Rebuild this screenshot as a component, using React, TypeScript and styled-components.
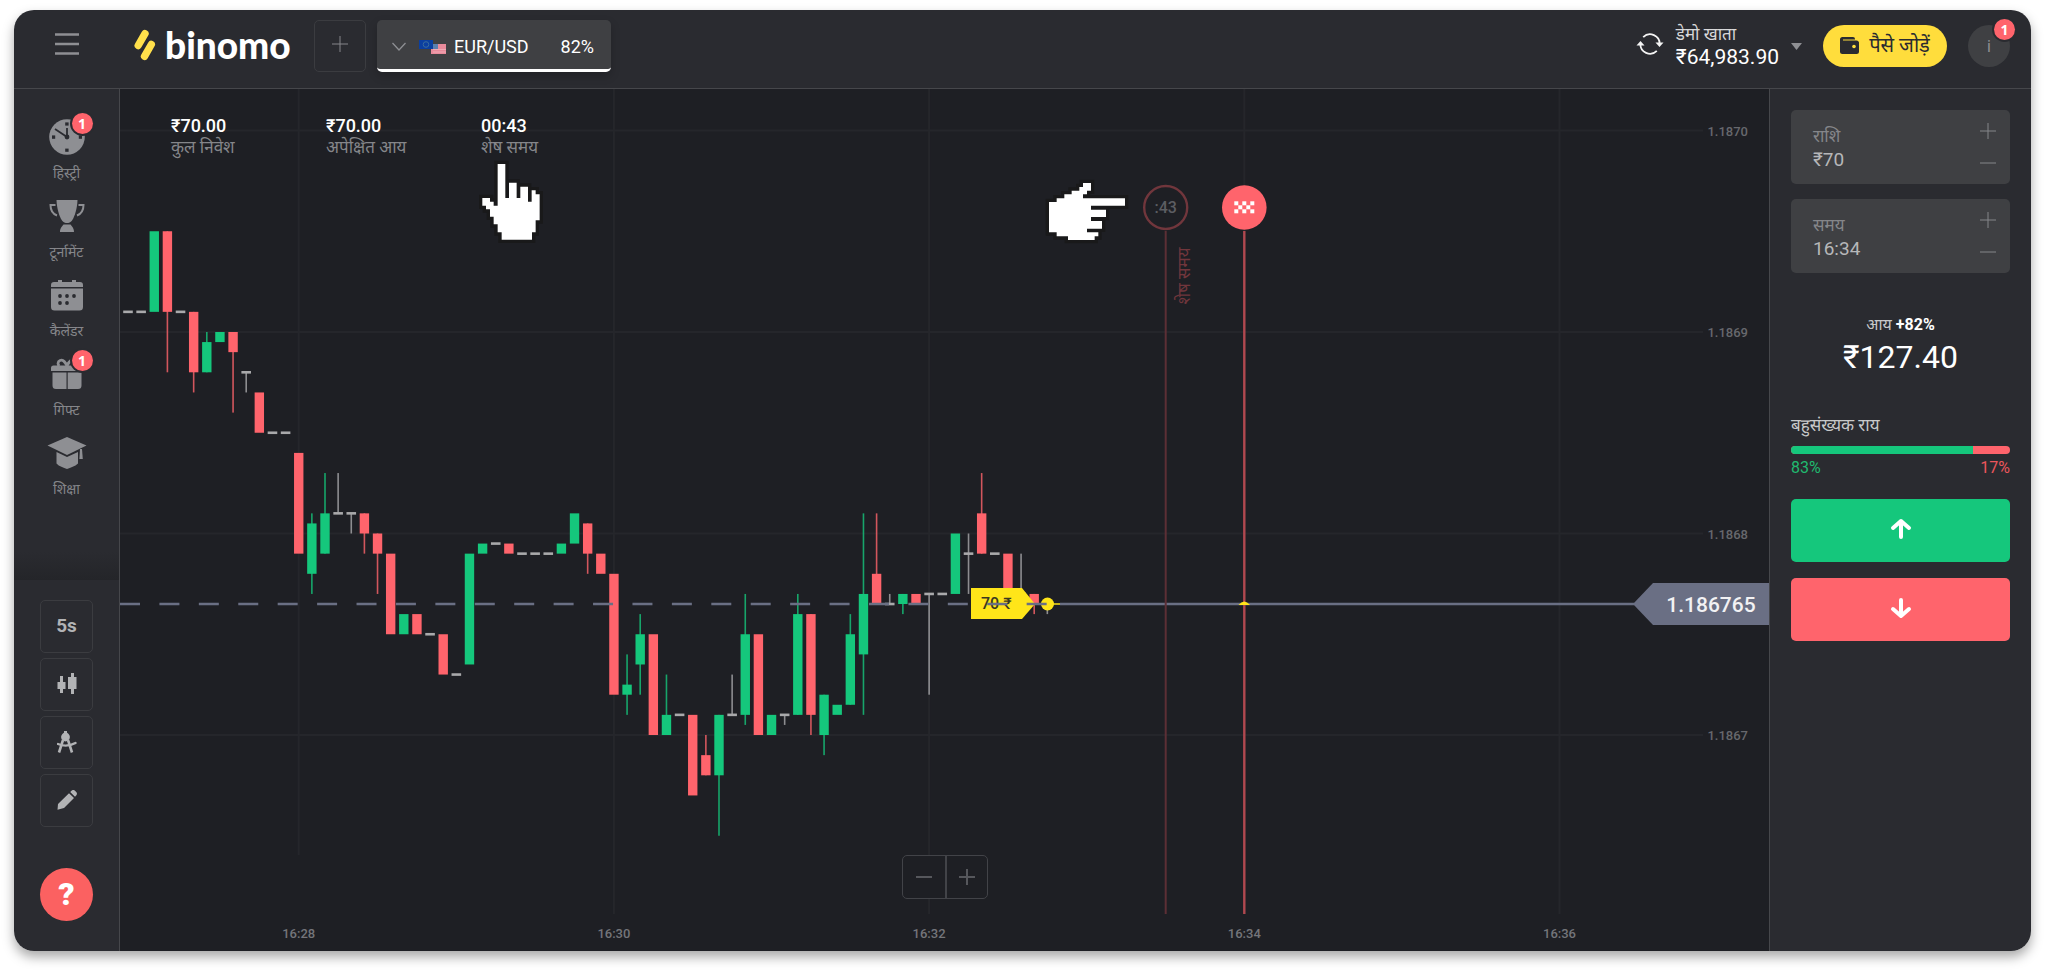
import React from "react";
import styled, { createGlobalStyle } from "styled-components";

const color = {
  panel: "#2a2b30",
  chart: "#1e1f24",
  line: "#46474b",
  faint: "#3b3c40",
  field: "#3f4043",
  muted: "#85868a",
  icon: "#8e8f93",
  green: "#15c77c",
  red: "#ff646c",
  yellow: "#ffdd3c",
  tag: "#6a6f84",
};

const Global = createGlobalStyle`
  *, *::before, *::after { box-sizing: border-box; }
  body {
    margin: 0;
    background: #fff;
    font-family: Roboto, "Noto Sans Devanagari", "Noto Sans", sans-serif;
    color: #fff;
  }
  button, input { font: inherit; color: inherit; }
  button { cursor: pointer; padding: 0; border: 0; background: none; }
`;

const Page = styled.div`
  padding: 10px 17px 22px 14px;
`;

const Shell = styled.div`
  display: flex;
  flex-direction: column;
  min-height: calc(100vh - 32px);
  border-radius: 20px;
  overflow: hidden;
  background: ${color.panel};
`;

const Frame = styled.div`
  border-radius: 20px;
  box-shadow: 0 6px 12px rgba(0, 0, 0, 0.34);
`;

/* ---------- header ---------- */

const Header = styled.header`
  display: flex;
  align-items: center;
  height: 79px;
  flex: none;
  padding: 0 21px 6px 0;
  border-bottom: 1px solid ${color.line};
`;

const MenuButton = styled.button`
  display: flex;
  justify-content: center;
  width: 105px;
  flex: none;
  padding-bottom: 4px;
`;

const Logo = styled.a`
  display: flex;
  align-items: center;
  gap: 9px;
  width: 180px;
  margin-left: 15px;
  padding-bottom: 2px;
  flex: none;
  color: #fff;
  text-decoration: none;
  font: 900 37px/40px Lato, sans-serif;
`;

const AddTab = styled.button`
  display: flex;
  align-items: center;
  justify-content: center;
  width: 52px;
  height: 52px;
  flex: none;
  border: 1px solid ${color.faint};
  border-radius: 5px;
  margin-right: 11px;
  padding-bottom: 4px;
`;

const AssetTab = styled.button`
  position: relative;
  display: flex;
  align-items: center;
  width: 234px;
  height: 52px;
  padding: 4px 17px 0 15px;
  overflow: hidden;
  flex: none;
  border-radius: 5px;
  background: ${color.field};
  box-shadow: 0 4px 10px rgba(0, 0, 0, 0.2);
  font-size: 18px;
  border-bottom: 3px solid #fff;
`;

const AssetName = styled.span`
  margin-left: 8px;
  flex: 1;
  text-align: left;
`;

const Pair = styled.svg`
  margin-left: 13px;
`;

const HeaderEnd = styled.div`
  display: flex;
  align-items: center;
  margin-left: auto;
`;

const Account = styled.button`
  display: flex;
  align-items: center;
  gap: 12px;
  text-align: left;
  margin-right: 21px;
`;

const AccountText = styled.span`
  display: flex;
  flex-direction: column;
`;

const AccountName = styled.span`
  font-size: 17px;
  line-height: 22px;
  color: #d8d8da;
`;

const Balance = styled.span`
  font-size: 21px;
  line-height: 24px;
`;

const Deposit = styled.button`
  display: flex;
  align-items: center;
  justify-content: center;
  gap: 10px;
  width: 124px;
  height: 42px;
  padding-bottom: 2px;
  border-radius: 21px;
  background: ${color.yellow};
  color: #2a2b30;
  font-size: 20px;
  line-height: 24px;
  margin-right: 21px;
`;

const Avatar = styled.button`
  position: relative;
  width: 42px;
  height: 42px;
  border-radius: 50%;
  background: ${color.field};
  color: ${color.icon};
  font-size: 16px;
`;

const Badge = styled.span`
  position: absolute;
  top: ${(p: { $top: number }) => p.$top}px;
  right: -5px;
  width: 21px;
  height: 21px;
  border-radius: 50%;
  background: ${color.red};
  box-shadow: 0 0 0 2px ${color.panel};
  color: #fff;
  font: 700 14px/21px "Open Sans", sans-serif;
  text-align: center;
`;

/* ---------- body ---------- */

const Body = styled.div`
  display: grid;
  grid-template-columns: 106px minmax(0, 1fr) 262px;
  flex: 1;
`;

const Sidebar = styled.aside`
  display: flex;
  flex-direction: column;
  border-right: 1px solid ${color.line};
`;

const Nav = styled.nav`
  display: flex;
  flex-direction: column;
  align-items: center;
  height: 491px;
  padding-top: 28px;
  background: linear-gradient(to top, #242529, ${color.panel} 28px);
`;

const NavItem = styled.a`
  display: flex;
  flex-direction: column;
  align-items: center;
  width: 100%;
  height: 79px;
  color: ${color.muted};
  text-decoration: none;
  font-size: 14px;
  line-height: 20px;
`;

const NavIcon = styled.span`
  position: relative;
  display: flex;
  align-items: center;
  justify-content: center;
  width: 40px;
  height: 40px;
  color: ${color.icon};
  margin-bottom: 6px;
`;

const BadgeSlot = styled.span`
  position: absolute;
  top: 0;
  right: -1px;
`;

const Tools = styled.div`
  display: flex;
  flex-direction: column;
  align-items: center;
  gap: 5px;
  padding: 20px 0 30px;
  flex: 1;
`;

const Tool = styled.button`
  display: flex;
  align-items: center;
  justify-content: center;
  width: 53px;
  height: 53px;
  padding-bottom: 2px;
  border: 1px solid ${color.faint};
  border-radius: 5px;
  color: #b2b3b5;
  font-size: 19px;
  font-weight: 700;
`;

const Help = styled.button`
  width: 53px;
  height: 53px;
  margin-top: auto;
  border-radius: 50%;
  background: #fb6161;
  font-size: 32px;
  font-weight: 900;
  line-height: 53px;
`;

const ChartArea = styled.main`
  position: relative;
  background: ${color.chart};
`;

const Chart = styled.svg`
  display: block;
  width: 100%;
  height: auto;
  font-family: Roboto, "Noto Sans Devanagari", "Noto Sans", sans-serif;
`;

const Stats = styled.dl`
  position: absolute;
  top: 26px;
  left: 51px;
  display: flex;
  margin: 0;
`;

const Stat = styled.div`
  display: flex;
  flex-direction: column-reverse;
  width: 155px;
`;

const StatLabel = styled.dt`
  font-size: 17px;
  line-height: 20px;
  color: ${color.muted};
`;

const StatValue = styled.dd`
  margin: 0;
  font-size: 18px;
  font-weight: 500;
  line-height: 22px;
`;

const Zoom = styled.div`
  position: absolute;
  left: 50%;
  bottom: 52px;
  transform: translateX(-50%);
  display: flex;
  border: 1px solid #424348;
  border-radius: 5px;
  background: ${color.chart};
`;

const ZoomButton = styled.button`
  display: flex;
  align-items: center;
  justify-content: center;
  width: 42px;
  height: 42px;
  & + & {
    border-left: 2px solid #424348;
  }
`;

/* ---------- deal panel ---------- */

const Deal = styled.aside`
  display: flex;
  flex-direction: column;
  padding: 21px 21px 0;
  border-left: 1px solid ${color.line};
`;

const Field = styled.div`
  display: flex;
  justify-content: space-between;
  height: 74px;
  padding: 12px 13px 12px 22px;
  margin-bottom: 15px;
  border-radius: 5px;
  background: ${color.field};
`;

const FieldText = styled.label`
  display: flex;
  flex-direction: column;
  padding-top: 2px;
  font-size: 17px;
  line-height: 24px;
  color: ${color.muted};
`;

const FieldInput = styled.input`
  width: 110px;
  padding: 0;
  border: 0;
  outline: 0;
  background: none;
  font-size: 19px;
  line-height: 24px;
  height: 24px;
  color: #b6b7b9;
`;

const Steps = styled.div`
  display: flex;
  flex-direction: column;
  justify-content: space-between;
`;

const Step = styled.button`
  display: flex;
  width: 18px;
  height: 18px;
`;

const Income = styled.div`
  margin-top: 25px;
  text-align: center;
  font-size: 16px;
  line-height: 24px;
  color: #c8c9ca;
`;

const Percent = styled.b`
  color: #fff;
`;

const Payout = styled.div`
  font-size: 32px;
  line-height: 40px;
  text-align: center;
`;

const MajorityTitle = styled.div`
  margin-top: 36px;
  font-size: 17px;
  line-height: 24px;
  color: #c8c9ca;
`;

const Bar = styled.div`
  display: flex;
  height: 8px;
  margin-top: 9px;
  border-radius: 4px;
  overflow: hidden;
  background: ${color.red};
`;

const BarFill = styled.div`
  background: ${color.green};
`;

const BarLabels = styled.div`
  display: flex;
  justify-content: space-between;
  margin: 3px 0 20px;
  font-size: 16px;
  line-height: 22px;
`;

const Share = styled.span<{ $up?: boolean }>`
  color: ${(p) => (p.$up ? "#20b96f" : "#ec565c")};
`;

const Trade = styled.button<{ $up?: boolean }>`
  display: flex;
  align-items: center;
  justify-content: center;
  height: 63px;
  padding-bottom: 4px;
  margin-bottom: 16px;
  border-radius: 5px;
  background: ${(p) => (p.$up ? color.green : color.red)};
`;

/* ---------- chart data ---------- */

type Kind = "g" | "r" | "d";
// kind, body top, body bottom, high, low — in half-pips below 1.1870
type Candle = [Kind, number, number, number?, number?];

const candles: Candle[] = [
  ["d", 18, 18], ["d", 18, 18], ["g", 10, 18], ["r", 10, 18, 10, 24], ["d", 18, 18],
  ["r", 18, 24, 18, 26], ["g", 21, 24, 20, 24], ["g", 20, 21], ["r", 20, 22, 20, 28],
  ["d", 24, 24, 24, 26], ["r", 26, 30], ["d", 30, 30], ["d", 30, 30], ["r", 32, 42],
  ["g", 39, 44, 38, 46], ["g", 38, 42, 34, 42], ["d", 38, 38, 34, 38], ["d", 38, 38, 38, 40],
  ["r", 38, 40, 38, 42], ["r", 40, 42, 40, 46], ["r", 42, 50], ["g", 48, 50], ["r", 48, 50],
  ["d", 50, 50], ["r", 50, 54], ["d", 54, 54], ["g", 42, 53], ["g", 41, 42], ["d", 41, 41],
  ["r", 41, 42], ["d", 42, 42], ["d", 42, 42], ["d", 42, 42], ["g", 41, 42], ["g", 38, 41],
  ["r", 39, 42, 39, 44], ["r", 42, 44], ["r", 44, 56], ["g", 55, 56, 52, 58],
  ["g", 50, 53, 48, 56], ["r", 50, 60], ["g", 58, 60, 54, 60], ["d", 58, 58], ["r", 58, 66],
  ["r", 62, 64, 60, 64], ["g", 58, 64, 58, 70], ["d", 58, 58, 54, 58], ["g", 50, 58, 46, 59],
  ["r", 50, 60], ["g", 58, 60], ["d", 58, 58, 58, 59], ["g", 48, 58, 46, 58],
  ["r", 48, 58, 48, 60], ["g", 56, 60, 56, 62], ["g", 57, 58], ["g", 50, 57, 48, 57],
  ["g", 46, 52, 38, 58], ["r", 44, 47, 38, 47], ["d", 47, 47, 46, 47], ["g", 46, 47, 46, 48],
  ["r", 46, 47], ["d", 46, 46, 46, 56], ["d", 46, 46], ["g", 40, 46], ["d", 42, 42, 40, 46],
  ["r", 38, 42, 34, 42], ["d", 42, 42], ["r", 42, 46], ["d", 46, 46, 42, 46],
  ["r", 46, 47, 46, 48], ["d", 47, 47, 47, 48],
];

const STEP = 315.2 / 24;
const candleX = (i: number) => 8 + i * STEP;
const priceY = (n: number) => 41.5 + n * 10.075;
const fills: Record<Kind, string> = { g: color.green, r: color.red, d: "#a9a9ab" };

const times = ["16:28", "16:30", "16:32", "16:34", "16:36"];
const prices = ["1.1870", "1.1869", "1.1868", "1.1867"];
const timeX = (i: number) => 178.7 + i * 315.2;
const PRICE_Y = 515;

const handUp =
  "413,492 436,492 436,594 447,594 447,548 470,548 470,594 481,594 481,560 504,560 504,605 515,605 515,571 527,571 527,583 539,583 539,661 527,661 527,697 516,697 516,719 425,719 425,697 413,697 413,673 401,673 401,650 390,650 390,628 378,628 378,617 367,617 367,594 390,594 390,605 401,605 401,617 413,617";
const handRight =
  "147,126 170,126 170,115 193,115 193,103 215,103 215,92 238,92 238,81 249,81 249,69 273,69 273,92 261,92 261,103 249,103 249,115 375,115 375,137 273,137 273,149 318,149 318,171 273,171 273,183 306,183 306,206 261,206 261,217 295,217 295,229 284,229 284,240 204,240 204,229 170,229 170,217 147,217";

const checks: [number, number][] = [
  [0, 0], [2, 0], [4, 0], [1, 1], [3, 1], [0, 2], [2, 2], [4, 2],
];

function PriceChart() {
  return (
    <Chart viewBox="0 0 1649 862" role="img" aria-label="EUR/USD">
      <g stroke="#25262b" strokeWidth="2">
        {times.map((t, i) => (
          <line key={t} x1={timeX(i)} x2={timeX(i)} y1="0" y2={i ? 825 : 766} />
        ))}
        {prices.map((p, i) => (
          <line key={p} x1="0" x2="1583" y1={priceY(i * 20)} y2={priceY(i * 20)} />
        ))}
      </g>
      <g fill="#74757a" fontSize="13" fontWeight="500">
        {times.map((t, i) => (
          <text key={t} x={timeX(i)} y="849" textAnchor="middle">{t}</text>
        ))}
        {prices.map((p, i) => (
          <text key={p} x="1628" y={priceY(i * 20) + 5} textAnchor="end" fill="#67686d">{p}</text>
        ))}
      </g>
      {candles.map(([kind, top, bottom, high, low], i) => (
        <g key={i} fill={fills[kind]}>
          {high !== undefined && low !== undefined && (
            <rect
              x={candleX(i) - 0.8}
              width="1.6"
              y={priceY(high)}
              height={(low - high) * 10.075}
              opacity="0.8"
            />
          )}
          {kind === "d" ? (
            <rect x={candleX(i) - 4.8} width="9.6" y={priceY(top) - 1.3} height="2.6" />
          ) : (
            <rect
              x={candleX(i) - 4.7}
              width="9.4"
              y={priceY(top)}
              height={(bottom - top) * 10.075}
            />
          )}
        </g>
      ))}

      <polygon points="851,499 902,499 915,515 902,530 851,530" fill="#ffe519" />
      <text x="861" y="520" fontSize="16" fontWeight="500" fill="#3a3820">70 ₹</text>
      <circle cx="927.5" cy={PRICE_Y} r="6.5" fill="#ffe519" />
      <line x1="932" x2="941" y1={PRICE_Y} y2={PRICE_Y} stroke="#ffe519" strokeWidth="1.5" />
      <line
        x1="0"
        x2="927"
        y1={PRICE_Y}
        y2={PRICE_Y}
        stroke={color.tag}
        strokeWidth="2.6"
        strokeDasharray="20 19.42"
      />
      <line x1="940" x2="1514" y1={PRICE_Y} y2={PRICE_Y} stroke={color.tag} strokeWidth="2.6" />
      <polygon points="1513,515 1533,494 1649,494 1649,536 1533,536" fill={color.tag} />
      <text x="1591" y="523" fontSize="21" fontWeight="500" fill="#f2f2f4" textAnchor="middle">
        1.186765
      </text>

      <g stroke="#5c2f35" fill="none">
        <line x1="1045.7" x2="1045.7" y1="142" y2="825" strokeWidth="2" />
        <circle cx="1045.7" cy="118.5" r="21.5" strokeWidth="2.4" stroke="#71363c" />
      </g>
      <text x="1045.7" y="124" fontSize="16" fontWeight="500" fill="#5c5d62" textAnchor="middle">:43</text>
      <text transform="translate(1070 187) rotate(-90)" fontSize="17" fill="#71363c" textAnchor="middle">
        शेष समय
      </text>

      <line x1="1124.3" x2="1124.3" y1="142" y2="825" stroke="#b0484f" strokeWidth="2.4" />
      <circle cx="1124.3" cy="118.5" r="22.3" fill={color.red} />
      {checks.map(([cx, cy]) => (
        <rect key={`${cx}-${cy}`} x={1114.3 + cx * 4} y={112.3 + cy * 4} width="4" height="4" fill="#fff" />
      ))}
      <path d="M1118.5 516 Q1124.3 509 1130 516 Z" fill="#ffe519" />

      <g fill="#fff" stroke="#19191a" strokeWidth="20" paintOrder="stroke">
        <polygon points={handUp} transform="translate(240 -89) scale(0.3333)" />
        <polygon points={handRight} transform="translate(880 71) scale(0.3333)" />
      </g>
    </Chart>
  );
}

/* ---------- icons ---------- */

const Plus = ({ size = 18, width = 1, stroke = "#85868a" }) => (
  <svg width={size} height={size} viewBox="0 0 18 18" stroke={stroke} strokeWidth={width}>
    <path d="M9 1v16M1 9h16" />
  </svg>
);
const Minus = ({ size = 18, width = 1, stroke = "#85868a" }) => (
  <svg width={size} height={size} viewBox="0 0 18 18" stroke={stroke} strokeWidth={width}>
    <path d="M1 9h16" />
  </svg>
);

const ClockIcon = () => (
  <svg width="36" height="36" viewBox="0 0 36 36">
    <circle cx="18" cy="18" r="17.8" fill="currentColor" />
    <g fill={color.panel}>
      <rect x="16.2" y="3.4" width="3.4" height="3.2" />
      <rect x="16.2" y="29.6" width="3.4" height="3.2" />
      <rect x="3" y="16.4" width="3.2" height="3.4" />
      <rect x="29.8" y="16.4" width="3.2" height="3.4" />
      <circle cx="18" cy="18" r="2.4" />
    </g>
    <path d="M18 18V9M18 18L6 10" stroke={color.panel} strokeWidth="1.8" />
  </svg>
);
const TrophyIcon = () => (
  <svg width="36" height="34" viewBox="0 0 36 34" fill="currentColor">
    <path d="M7.5 1h21c-.3 8-2.500 16-5.500 20.500-1.500 2-3.200 2.500-5 2.500s-3.500-.5-5-2.500C10 17 7.800 9 7.500 1z" />
    <path d="M14.500 25.500h7c1.500 2 3.500 3.500 3.500 7.500H11c0-4 2-5.500 3.500-7.500z" />
    <path d="M6.500 6H1.500c0 5 2.500 9 6.500 10.500M29.500 6h5c0 5-2.500 9-6.500 10.500" fill="none" stroke="currentColor" strokeWidth="2" />
  </svg>
);
const CalendarIcon = () => (
  <svg width="32" height="32" viewBox="0 0 32 32">
    <path d="M3 3h4V1h4v2h10V1h4v2h4a3 3 0 0 1 3 3v2H0V6a3 3 0 0 1 3-3zM0 9.500h32V28a3.500 3.500 0 0 1-3.500 3.500h-25A3.500 3.500 0 0 1 0 28z" fill="currentColor" />
    <g fill={color.panel}>
      {[[9, 17], [16, 17], [23, 17], [9, 24], [16, 24]].map(([x, y]) => (
        <circle key={`${x}-${y}`} cx={x} cy={y} r="1.900" />
      ))}
    </g>
  </svg>
);
const GiftIcon = () => (
  <svg width="32" height="32" viewBox="0 0 32 32" fill="currentColor">
    <path d="M0 13V10a2.500 2.500 0 0 1 2.500-2.500h27A2.500 2.500 0 0 1 32 10v3z" />
    <path d="M1.500 14.500h14V31H5a3.500 3.500 0 0 1-3.500-3.500zM16.700 14.500h13.800v13A3.500 3.500 0 0 1 27 31H16.700z" />
    <path d="M16 8C14 3 11.500 1.500 9 2.500S6.500 7 8.500 8M16 8c2-5 4.500-6.500 7-5.500s2.500 4.500.5 5.500" fill="none" stroke="currentColor" strokeWidth="2.800" />
  </svg>
);
const CapIcon = () => (
  <svg width="40" height="34" viewBox="0 0 40 34" fill="currentColor">
    <path d="M20 1L0.500 9.500 20 19l19.500-9.500z" />
    <path d="M9.500 16L20 21l11-5v11.500C28 30.500 23.500 31.500 20 33c-3.500-1.500-8-2.500-10.500-5.500z" />
    <path d="M33 13h2l.8 10h-3.400z" />
  </svg>
);

const navItems = [
  { label: "हिस्ट्री", icon: <ClockIcon />, badge: true },
  { label: "टूर्नामेंट", icon: <TrophyIcon /> },
  { label: "कैलेंडर", icon: <CalendarIcon /> },
  { label: "गिफ्ट", icon: <GiftIcon />, badge: true },
  { label: "शिक्षा", icon: <CapIcon /> },
];

const stats = [
  { value: "₹70.00", label: "कुल निवेश" },
  { value: "₹70.00", label: "अपेक्षित आय" },
  { value: "00:43", label: "शेष समय" },
];

const fields = [
  { id: "amount", label: "राशि", value: "₹70" },
  { id: "time", label: "समय", value: "16:34" },
];

const majorityUp = 83;

export default function App() {
  return (
    <Page>
      <Global />
      <Frame>
        <Shell>
          <Header>
            <MenuButton aria-label="मेनू">
              <svg width="24" height="22" viewBox="0 0 24 22" stroke={color.icon} strokeWidth="2.600">
                <path d="M0 1.500h24M0 11h24M0 20.500h24" />
              </svg>
            </MenuButton>
            <Logo href="#">
              <svg width="22" height="32" viewBox="0 0 22 32" stroke="#ffe04b" strokeWidth="7.400" strokeLinecap="round">
                <path d="M4.200 16.500L11 4.700M10.500 27.300L17.300 15.500" />
              </svg>
              binomo
            </Logo>
            <AddTab aria-label="जोड़ें"><Plus /></AddTab>
            <AssetTab>
              <svg width="14" height="9" viewBox="0 0 14 9" fill="none" stroke={color.icon} strokeWidth="1.300">
                <path d="M0.500 1L7 8l6.500-7" />
              </svg>
              <Pair width="27" height="14" viewBox="0 0 27 14">
                <rect x="12" y="4" width="15" height="10" fill="#e88a9b" />
                <path d="M14 9.500h13M14 12h13" stroke="#f0a9b5" strokeWidth="1" />
                <rect x="12" y="4" width="7" height="5" fill="#5a7fb0" />
                <rect width="14" height="9" fill="#0b3fa0" />
                <circle cx="7" cy="4.500" r="2.800" fill="none" stroke="#3a6c9c" strokeWidth="1" />
              </Pair>
              <AssetName>EUR/USD</AssetName>
              <span>82%</span>
            </AssetTab>
            <HeaderEnd>
              <Account>
                <svg width="28" height="26" viewBox="0 0 28 26" fill="none" stroke="#f4f4f4" strokeWidth="1.800">
                  <path d="M7.200 4.200A9.600 9.600 0 0 1 23.600 11.500M20.800 17.800A9.600 9.600 0 0 1 4.400 10.500" />
                  <path d="M0.500 12.500l4-4.500 4 4.500zM19.500 9.500l4 4.500 4-4.500z" fill="#f4f4f4" stroke="none" />
                </svg>
                <AccountText>
                  <AccountName>डेमो खाता</AccountName>
                  <Balance>₹64,983.90</Balance>
                </AccountText>
                <svg width="11" height="7" viewBox="0 0 11 7" fill={color.icon}>
                  <path d="M0 0h11L5.500 7z" />
                </svg>
              </Account>
              <Deposit>
                <svg width="19" height="17" viewBox="0 0 19 17" fill="#2a2b30">
                  <path d="M2.500 0H13a2 2 0 0 1 2 2v.5H3v1h13.500A2.500 2.500 0 0 1 19 5.500V6h-4.500a3.300 3.300 0 0 0 0 7H19v1.500a2.500 2.500 0 0 1-2.500 2.500h-14A2.500 2.500 0 0 1 0 14.500v-12A2.500 2.500 0 0 1 2.500 0z" />
                  <path d="M14 5.500H19v8h-5a4 4 0 0 1 0-8z" />
                  <circle cx="14" cy="9.500" r="1.800" fill={color.yellow} />
                </svg>
                पैसे जोड़ें
              </Deposit>
              <Avatar>
                i<Badge $top={-6}>1</Badge>
              </Avatar>
            </HeaderEnd>
          </Header>

          <Body>
            <Sidebar>
              <Nav>
                {navItems.map((item) => (
                  <NavItem key={item.label} href="#">
                    <NavIcon>
                      {item.icon}
                      {item.badge && (
                        <BadgeSlot>
                          <Badge $top={-4}>1</Badge>
                        </BadgeSlot>
                      )}
                    </NavIcon>
                    {item.label}
                  </NavItem>
                ))}
              </Nav>
              <Tools>
                <Tool>5s</Tool>
                <Tool aria-label="चार्ट">
                  <svg width="20" height="22" viewBox="0 0 20 22" fill="currentColor">
                    <path d="M3 3h3v6h2.500v7H6v4H3v-4H0.500V9H3zM14 0h3v4h2.500v12H17v5h-3v-5h-3V4h3z" />
                  </svg>
                </Tool>
                <Tool aria-label="संकेतक">
                  <svg width="20" height="22" viewBox="0 0 20 22">
                    <g fill="none" stroke="currentColor" strokeWidth="2.600">
                      <path d="M6 9L2 21.500M11 9l4 12.500" />
                      <path d="M1 13c6 2.500 12 2 17.500-1" strokeLinecap="round" strokeWidth="2.400" />
                    </g>
                    <circle cx="8.500" cy="6" r="4.400" fill="currentColor" />
                    <rect x="7" y="0" width="3" height="4" fill="currentColor" />
                  </svg>
                </Tool>
                <Tool aria-label="ड्राइंग">
                  <svg width="20" height="20" viewBox="0 0 20 20" fill="currentColor">
                    <path d="M12 3.200l5 4.800L7 18l-6.500 1.700L1 14zM13.200 2l1.300-1.200a2.500 2.500 0 0 1 3.500 0l1.200 1.300a2.500 2.500 0 0 1 0 3.400L18 6.800z" />
                  </svg>
                </Tool>
                <Help aria-label="सहायता">?</Help>
              </Tools>
            </Sidebar>

            <ChartArea>
              <PriceChart />
              <Stats>
                {stats.map((s) => (
                  <Stat key={s.label}>
                    <StatLabel>{s.label}</StatLabel>
                    <StatValue>{s.value}</StatValue>
                  </Stat>
                ))}
              </Stats>
              <Zoom>
                <ZoomButton aria-label="ज़ूम आउट"><Minus width={2} stroke="#56575c" /></ZoomButton>
                <ZoomButton aria-label="ज़ूम इन"><Plus width={2} stroke="#56575c" /></ZoomButton>
              </Zoom>
            </ChartArea>

            <Deal>
              {fields.map((f) => (
                <Field key={f.id}>
                  <FieldText htmlFor={f.id}>
                    {f.label}
                    <FieldInput id={f.id} defaultValue={f.value} />
                  </FieldText>
                  <Steps>
                    <Step aria-label="बढ़ाएं"><Plus /></Step>
                    <Step aria-label="घटाएं"><Minus /></Step>
                  </Steps>
                </Field>
              ))}
              <Income>
                आय <Percent>+82%</Percent>
              </Income>
              <Payout>₹127.40</Payout>
              <MajorityTitle>बहुसंख्यक राय</MajorityTitle>
              <Bar>
                <BarFill style={{ width: `${majorityUp}%` }} />
              </Bar>
              <BarLabels>
                <Share $up>{majorityUp}%</Share>
                <Share>{100 - majorityUp}%</Share>
              </BarLabels>
              <Trade $up aria-label="ऊपर">
                <svg width="22" height="22" viewBox="0 0 22 22" fill="none" stroke="#fff" strokeWidth="4" strokeLinecap="round" strokeLinejoin="round">
                  <path d="M11 3v16M3 10l8-7 8 7" />
                </svg>
              </Trade>
              <Trade aria-label="नीचे">
                <svg width="22" height="22" viewBox="0 0 22 22" fill="none" stroke="#fff" strokeWidth="4" strokeLinecap="round" strokeLinejoin="round">
                  <path d="M11 3v16M3 12l8 7 8-7" />
                </svg>
              </Trade>
            </Deal>
          </Body>
        </Shell>
      </Frame>
    </Page>
  );
}
